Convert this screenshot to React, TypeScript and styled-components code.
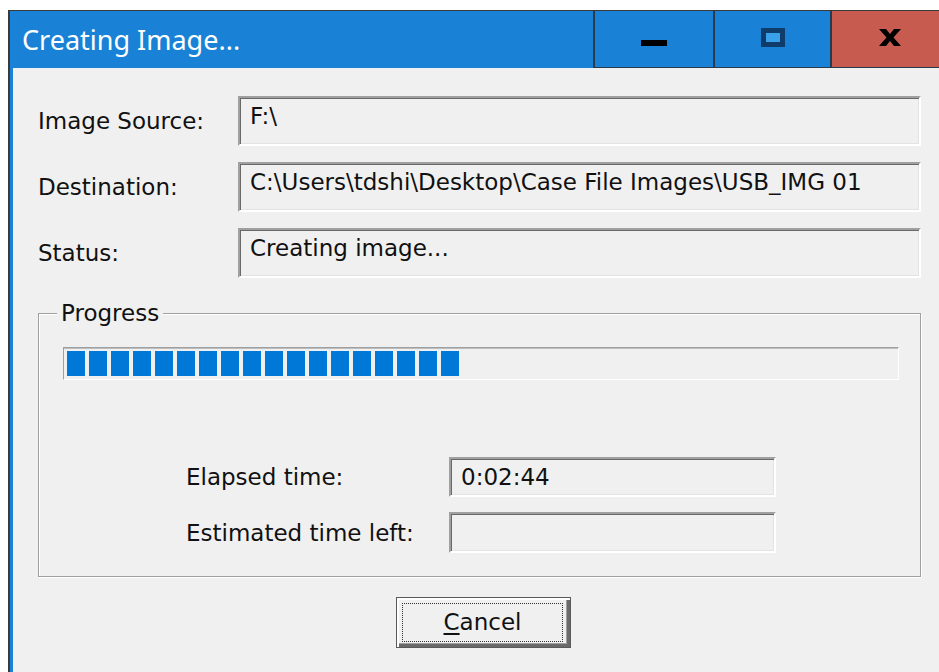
import * as React from "react";
import styled, { createGlobalStyle } from "styled-components";

const GlobalStyle = createGlobalStyle`
  html, body {
    margin: 0;
    padding: 0;
    background: #ffffff;
  }
  body {
    overflow: hidden;
  }
`;

const UI_FONT = `"DejaVu Sans", "Liberation Sans", sans-serif`;

const Page = styled.div`
  width: 939px;
  height: 672px;
  padding: 10px 0 0 8px;
  box-sizing: border-box;
  overflow: hidden;
`;

const Frame = styled.div`
  width: 939px;
  height: 100%;
  box-sizing: border-box;
  border-top: 1px solid #3a3a3a;
  border-left: 2px solid #3a3a3a;
  background: #1a82d6;
  padding-left: 3px;
  display: flex;
  flex-direction: column;
`;

const TitleBar = styled.div`
  height: 57px;
  display: flex;
  align-items: stretch;
  flex-shrink: 0;
`;

const TitleText = styled.div`
  flex: 1;
  padding-left: 9px;
  color: #ffffff;
  font-family: "Noto Sans", "Open Sans", sans-serif;
  font-size: 27px;
  line-height: 57px;
  white-space: nowrap;
`;

interface CaptionButtonProps {
    $width: number;
    $danger?: boolean;
}

const CaptionButton = styled.div<CaptionButtonProps>`
  width: ${(props) => props.$width}px;
  box-sizing: border-box;
  background: ${(props) => (props.$danger ? "#c75b50" : "#1a82d6")};
  border-left: 2px solid #283b4d;
  border-bottom: 1px solid #283b4d;
  display: flex;
  align-items: center;
  justify-content: center;
`;

const MinimizeGlyph = styled.div`
  width: 26px;
  height: 6px;
  background: #000000;
  margin-top: 8px;
`;

const MaximizeGlyph = styled.div`
  width: 24px;
  height: 19px;
  box-sizing: border-box;
  border: 5px solid #0f3c6b;
  background: #3aa0ea;
  margin-top: -4px;
`;

const Client = styled.div`
  flex: 1;
  background: #f0f0f0;
  padding: 28px 0 0 25px;
  box-sizing: border-box;
  font-family: ${UI_FONT};
  font-size: 23px;
  color: #111111;
`;

const FormGrid = styled.div`
  display: grid;
  grid-template-columns: 200px 683px;
  grid-auto-rows: 50px;
  row-gap: 16px;
  align-items: center;
`;

const Label = styled.div`
  white-space: nowrap;
`;

interface FieldProps {
    $height?: number;
}

const Field = styled.div<FieldProps>`
  height: ${(props) => props.$height || 50}px;
  box-sizing: border-box;
  border: 2px solid;
  border-color: #a0a0a0 #ffffff #ffffff #a0a0a0;
  box-shadow: inset 1px 1px 0 #696969, inset -1px -1px 0 #e3e3e3;
  padding: 5px 10px 0 10px;
  line-height: 27px;
  white-space: nowrap;
  overflow: hidden;
`;

const GroupBox = styled.div`
  position: relative;
  margin-top: 35px;
  width: 883px;
  height: 264px;
  box-sizing: border-box;
  border: 1px solid #a0a0a0;
  box-shadow: inset 1px 1px 0 #ffffff, 1px 1px 0 #ffffff;
  padding: 33px 21px 0 24px;
`;

const GroupCaption = styled.span`
  position: absolute;
  top: -14px;
  left: 18px;
  padding: 0 4px;
  background: #f0f0f0;
  line-height: 27px;
`;

const ProgressTrack = styled.div`
  height: 33px;
  box-sizing: border-box;
  border: 1px solid;
  border-color: #a0a0a0 #ffffff #ffffff #a0a0a0;
  box-shadow: inset 0 1px 0 #bdbdbd;
  padding: 3px;
  display: flex;
  gap: 4px;
  align-items: stretch;
`;

const ProgressBlock = styled.div`
  width: 18px;
  background: #0078d7;
`;

const TimeGrid = styled.div`
  margin: 77px 0 0 123px;
  display: grid;
  grid-template-columns: 263px 327px;
  row-gap: 15px;
  align-items: center;
`;

const ButtonRow = styled.div`
  padding: 20px 0 0 358px;
`;

const PushButton = styled.button`
  width: 175px;
  height: 51px;
  box-sizing: border-box;
  background: #f0f0f0;
  border: 1px solid #5a5a5a;
  box-shadow: inset 2px 2px 0 #ffffff, inset -3px -3px 0 #6a6a6a, inset -4px -4px 0 #a0a0a0;
  padding: 5px;
  font-family: ${UI_FONT};
  font-size: 23px;
  color: #111111;
  cursor: default;
`;

const FocusRing = styled.div`
  height: 100%;
  box-sizing: border-box;
  border: 1px dotted #333333;
  display: flex;
  align-items: center;
  justify-content: center;
  margin-right: 2px;
  padding-bottom: 2px;
`;

const AccessKey = styled.span`
  text-decoration: underline;
  text-underline-offset: 3px;
`;

// bold "x" of the close caption button, slightly flared at the tips
function CloseGlyph() {
    return (
        <svg width="24" height="19" viewBox="0 0 24 19" style={{ marginTop: "-4px" }}>
            <path
                d="M1 1 H8 L12 6 L16 1 H23 L15.5 9.5 L23 18 H16 L12 13 L8 18 H1 L8.5 9.5 Z"
                fill="#000000"
            />
        </svg>
    );
}

export default function App() {
    const blocks = Array.from({ length: 18 });

    return (
        <>
            <GlobalStyle />
            <Page>
                <Frame>
                    <TitleBar>
                        <TitleText>Creating Image...</TitleText>
                        <CaptionButton $width={120}>
                            <MinimizeGlyph />
                        </CaptionButton>
                        <CaptionButton $width={117}>
                            <MaximizeGlyph />
                        </CaptionButton>
                        <CaptionButton $width={117} $danger>
                            <CloseGlyph />
                        </CaptionButton>
                    </TitleBar>
                    <Client>
                        <FormGrid>
                            <Label>Image Source:</Label>
                            <Field>F:\</Field>
                            <Label>Destination:</Label>
                            <Field>C:\Users\tdshi\Desktop\Case File Images\USB_IMG 01</Field>
                            <Label>Status:</Label>
                            <Field>Creating image...</Field>
                        </FormGrid>
                        <GroupBox>
                            <GroupCaption>Progress</GroupCaption>
                            <ProgressTrack>
                                {blocks.map((_, i) => (
                                    <ProgressBlock key={i} />
                                ))}
                            </ProgressTrack>
                            <TimeGrid>
                                <Label>Elapsed time:</Label>
                                <Field $height={40}>0:02:44</Field>
                                <Label>Estimated time left:</Label>
                                <Field $height={41} />
                            </TimeGrid>
                        </GroupBox>
                        <ButtonRow>
                            <PushButton>
                                <FocusRing>
                                    <span>
                                        <AccessKey>C</AccessKey>ancel
                                    </span>
                                </FocusRing>
                            </PushButton>
                        </ButtonRow>
                    </Client>
                </Frame>
            </Page>
        </>
    );
}
